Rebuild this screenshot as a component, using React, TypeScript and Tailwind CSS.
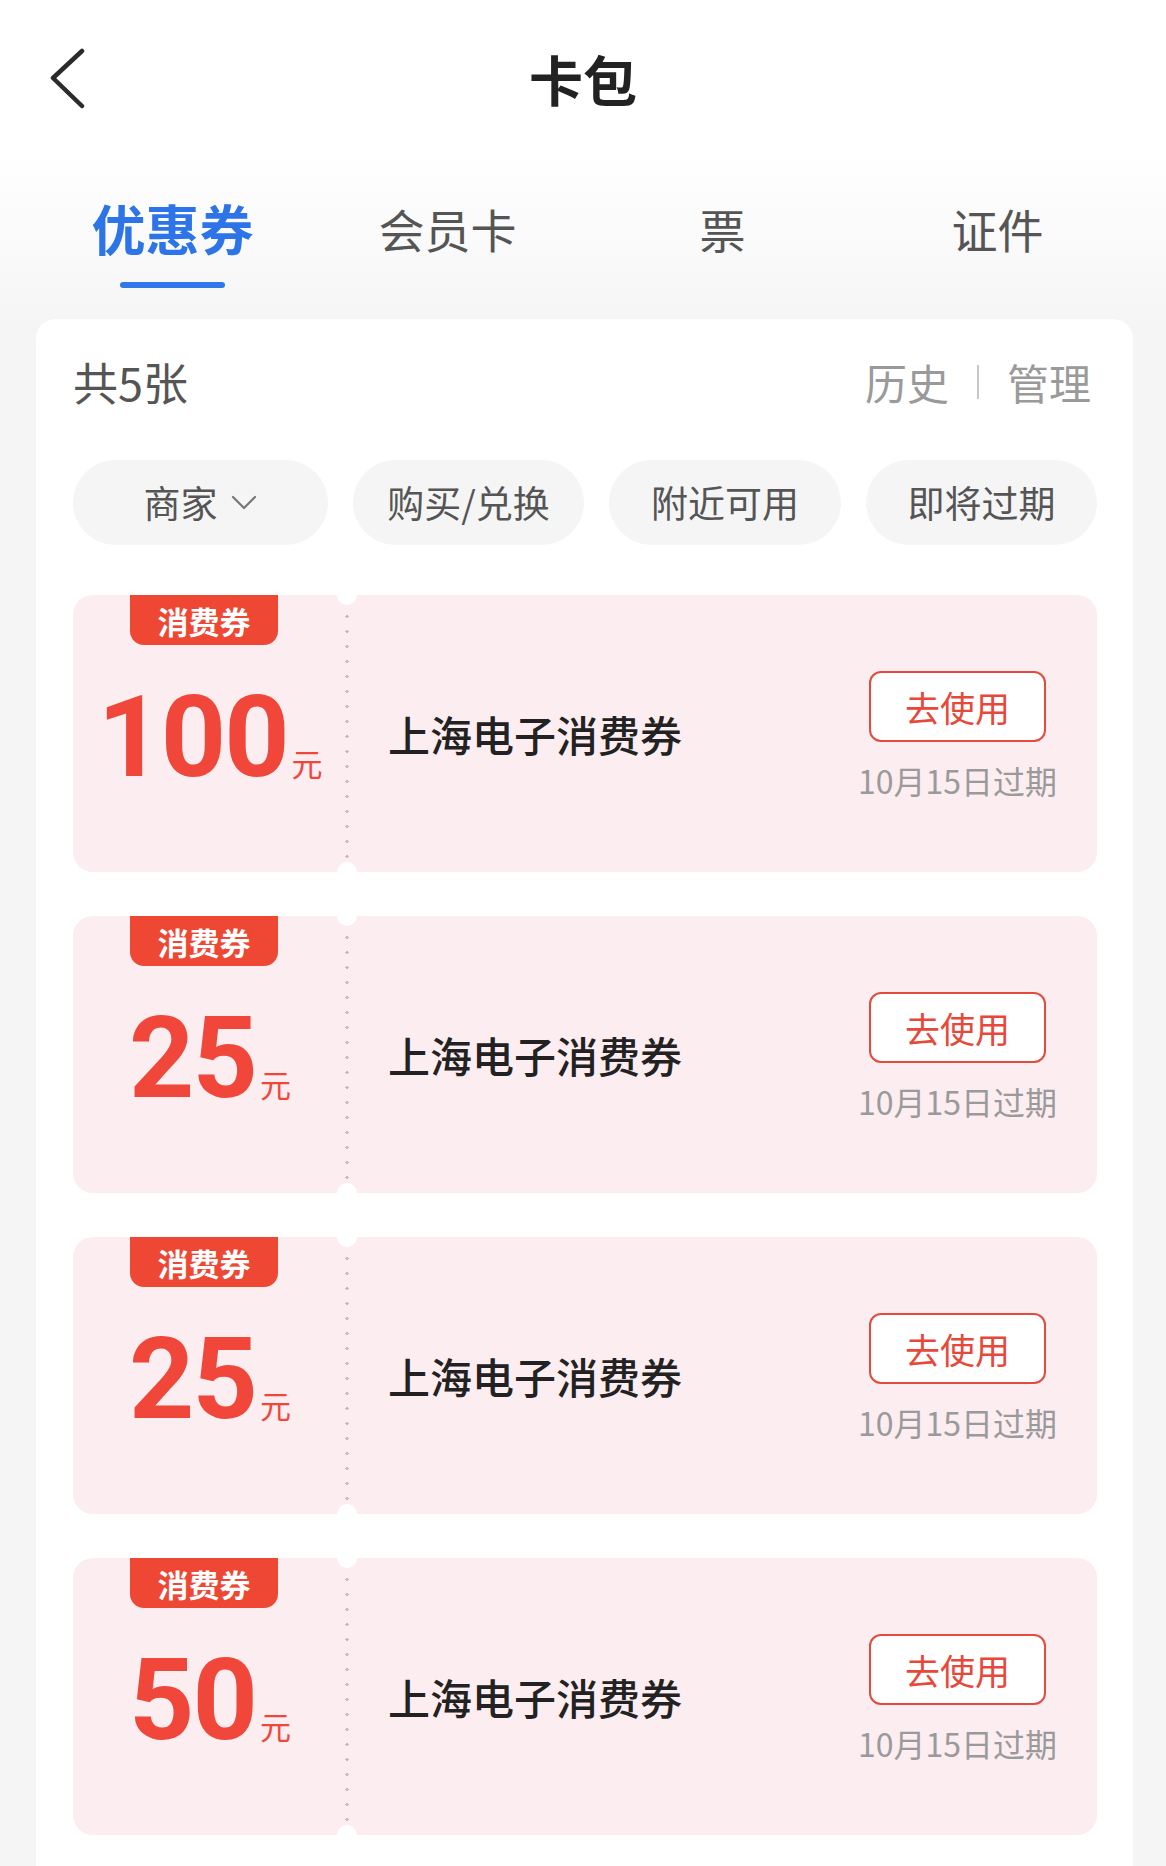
import React from "react";

const coupons = ["100", "25", "25", "50"];

function BackIcon() {
  return (
    <svg width="40" height="62" viewBox="0 0 40 62" fill="none">
      <path d="M34 3 L5 30 L34 58" stroke="#2b2b2b" strokeWidth="4.5" strokeLinecap="round" strokeLinejoin="round" />
    </svg>
  );
}

function ChevronDown() {
  return (
    <svg width="28" height="18" viewBox="0 0 28 18" fill="none">
      <path d="M3 3 L14 14 L25 3" stroke="#777" strokeWidth="2.2" strokeLinecap="round" strokeLinejoin="round" />
    </svg>
  );
}

function Coupon({ amount }: { amount: string }) {
  return (
    <div className="relative flex h-[277px]">
      <div className="flex w-[274px] flex-col rounded-l-[20px] bg-[#fcedf0]">
        <div className="ml-[57px] flex h-[50px] w-[148px] items-center justify-center rounded-b-[14px] bg-[#ee4835] text-[31px] font-bold leading-none text-white">
          消费券
        </div>
        <div className="mt-[35px] flex items-baseline justify-center">
          <span className="font-['Roboto',sans-serif] text-[114px] font-bold leading-none tracking-[-2px] text-[#f0473a]">
            {amount}
          </span>
          <span className="ml-[4px] text-[31px] leading-none text-[#f0473a]">元</span>
        </div>
      </div>
      <div className="flex flex-1 items-center justify-between rounded-r-[20px] bg-[#fcedf0] pl-[41px] pr-[40px]">
        <div className="text-[42px] font-medium leading-none text-[#222]">上海电子消费券</div>
        <div className="flex flex-col items-center self-start pt-[76px]">
          <div className="flex h-[71px] w-[177px] items-center justify-center rounded-[12px] border-2 border-[#e24b3e] bg-white text-[35px] leading-none text-[#e8483a]">
            去使用
          </div>
          <div className="mt-[18px] text-[32px] leading-[40px] text-[#9a9a9a]">10月15日过期</div>
        </div>
      </div>
      <div className="absolute bottom-[14px] left-[272px] top-[14px] w-[4px] bg-[radial-gradient(circle,#d6b6be_1.5px,transparent_1.8px)] bg-[length:4px_15px] bg-repeat-y" />
      <div className="absolute -top-[10px] left-[264px] h-[20px] w-[20px] rounded-full bg-white" />
      <div className="absolute -bottom-[10px] left-[264px] h-[20px] w-[20px] rounded-full bg-white" />
    </div>
  );
}

export default function App() {
  const tabs = [
    { label: "优惠券", active: true },
    { label: "会员卡", active: false },
    { label: "票", active: false },
    { label: "证件", active: false },
  ];
  const chips = [
    { label: "商家", w: "w-[255px]", arrow: true },
    { label: "购买/兑换", w: "w-[231px]", arrow: false },
    { label: "附近可用", w: "w-[232px]", arrow: false },
    { label: "即将过期", w: "w-[231px]", arrow: false },
  ];
  return (
    <div className="h-[1866px] w-[1166px] overflow-hidden bg-[linear-gradient(to_bottom,#ffffff_0px,#ffffff_150px,#f5f5f5_330px)] font-['Noto_Sans_CJK_SC','Noto_Sans',sans-serif]">
      <header className="grid h-[158px] grid-cols-[1fr_auto_1fr] items-center px-[48px]">
        <div className="flex items-center">
          <BackIcon />
        </div>
        <h1 className="text-[54px] font-bold leading-none text-[#222]">卡包</h1>
        <div />
      </header>

      <nav className="ml-[35px] grid w-[1100px] grid-cols-4 pt-[40px]">
        {tabs.map((t) => (
          <div key={t.label} className="flex flex-col items-center">
            <div
              className={
                t.active
                  ? "h-[60px] text-[54px] font-bold leading-[60px] text-[#2d74e8]"
                  : "h-[60px] text-[46px] leading-[60px] text-[#555]"
              }
            >
              {t.label}
            </div>
            <div className={t.active ? "mt-[24px] h-[6px] w-[105px] rounded-full bg-[#3078ea]" : "mt-[24px] h-[6px]"} />
          </div>
        ))}
      </nav>

      <main className="ml-[36px] mt-[31px] w-[1097px] rounded-t-[20px] bg-white pb-[80px] pl-[37px] pr-[36px] pt-[38px]">
        <div className="flex h-[50px] items-center justify-between">
          <div className="text-[45px] leading-[50px] text-[#555]">共5张</div>
          <div className="mr-[6px] flex items-center text-[42px] leading-[50px] text-[#9a9a9a]">
            <span>历史</span>
            <span className="mx-[28px] h-[34px] w-[2px] bg-[#c8c8c8]" />
            <span>管理</span>
          </div>
        </div>

        <div className="mt-[53px] flex gap-[25px]">
          {chips.map((c) => (
            <div
              key={c.label}
              className={`${c.w} flex h-[85px] items-center justify-center rounded-full bg-[#f5f5f5] text-[37px] leading-none text-[#555]`}
            >
              <span>{c.label}</span>
              {c.arrow && (
                <span className="ml-[12px] flex items-center">
                  <ChevronDown />
                </span>
              )}
            </div>
          ))}
        </div>

        <div className="mt-[50px] flex flex-col gap-[44px]">
          {coupons.map((a, i) => (
            <Coupon key={i} amount={a} />
          ))}
        </div>
      </main>
    </div>
  );
}
